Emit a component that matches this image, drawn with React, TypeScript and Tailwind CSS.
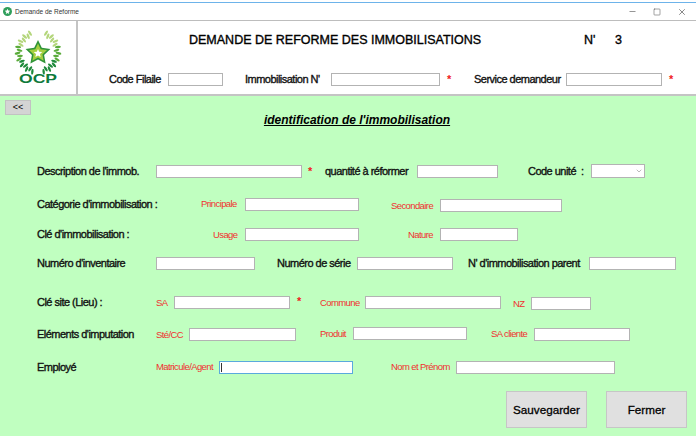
import { Minus, Square, X, ChevronDown } from 'lucide-react'

const sans = "font-['Liberation_Sans',Arial,sans-serif]"

function starPoints(cx: number, cy: number, outer: number, inner: number) {
  const pts: string[] = []
  for (let i = 0; i < 10; i++) {
    const r = i % 2 === 0 ? outer : inner
    const a = (-90 + i * 36) * (Math.PI / 180)
    pts.push(`${(cx + r * Math.cos(a)).toFixed(1)},${(cy + r * Math.sin(a)).toFixed(1)}`)
  }
  return pts.join(' ')
}

// OCP emblem: wheat wreath round a green star
function Logo() {
  const cx = 38
  const cy = 31
  const leaves: { x: number; y: number; rot: number; fill: string }[] = []
  for (let i = 0; i < 17; i++) {
    const deg = 16 + i * 8.8
    const a = (deg * Math.PI) / 180
    const r = i % 2 === 0 ? 20.5 : 18.5
    const fill = i < 6 ? '#1f8a3c' : i < 11 ? '#5aab3a' : '#b4d67c'
    const x = r * Math.sin(a)
    const y = r * Math.cos(a)
    leaves.push({ x: cx + x, y: cy + y, rot: 90 - deg + (i % 2 === 0 ? 10 : -10), fill })
    leaves.push({ x: cx - x, y: cy + y, rot: deg - 90 - (i % 2 === 0 ? 10 : -10), fill })
  }
  return (
    <svg viewBox="0 0 76 73" className="w-[76px] h-[73px] shrink-0">
      {leaves.map((l, i) => (
        <ellipse key={i} cx={l.x} cy={l.y} rx="3" ry="1.2" fill={l.fill} transform={`rotate(${l.rot} ${l.x} ${l.y})`} />
      ))}
      <polygon points={starPoints(38, 32, 13, 6.4)} fill="#2f9438" />
      <polygon points={starPoints(38, 32, 9.5, 4.6)} fill="#a5cf3f" />
      <polygon points={starPoints(38, 32.5, 4.5, 2.1)} fill="#ffffff" />
      <text x="19" y="62" textLength="38" lengthAdjust="spacingAndGlyphs" fontFamily="'Liberation Sans', Arial, sans-serif" fontWeight="700" fontSize="13.5" fill="#0f7a3c">OCP</text>
    </svg>
  )
}

function Field({ className = '' }: { className?: string }) {
  return <input className={`h-[13px] shrink-0 border border-[#b3b3b3] bg-white outline-none ${className}`} />
}

function Label({ children, className = '' }: { children: React.ReactNode; className?: string }) {
  return <span className={`shrink-0 whitespace-nowrap text-[11px] tracking-[-0.52px] leading-[14px] text-[#111] [-webkit-text-stroke:0.35px_#111] ${className}`}>{children}</span>
}

function Red({ children, className = '' }: { children: React.ReactNode; className?: string }) {
  return <span className={`shrink-0 whitespace-nowrap text-[9.5px] tracking-[-0.6px] leading-[14px] text-[#f03030] ${className}`}>{children}</span>
}

function Star({ className = '' }: { className?: string }) {
  return <span className={`shrink-0 text-[11px] leading-[14px] font-bold text-[#f02020] ${className}`}>*</span>
}

export default function App() {
  return (
    <div className={`${sans} w-[696px] h-[436px] overflow-hidden bg-white flex flex-col`}>
      {/* Title bar */}
      <div className="h-[21px] shrink-0 border-b border-[#bdbdbd] flex flex-col">
        <div className="h-[3px] shrink-0 border-b border-[#6db3ea]" />
        <div className="flex-1 flex items-center pl-[3px]">
          <svg viewBox="0 0 10 10" className="w-[9px] h-[9px] shrink-0">
            <circle cx="5" cy="5" r="5" fill="#2f9e5b" />
            <polygon points={starPoints(5, 5.2, 3.2, 1.5)} fill="#ffffff" />
          </svg>
          <span className="ml-[3px] text-[6.5px] leading-[10px] text-[#333]">Demande de Reforme</span>
          <div className="ml-auto flex items-center text-[#444]">
            <Minus className="w-[9px] h-[9px] mr-[16px]" strokeWidth={1.5} />
            <Square className="w-[8px] h-[8px] mr-[16px]" strokeWidth={1.5} />
            <X className="w-[10px] h-[10px] mr-[9px]" strokeWidth={1.5} />
          </div>
        </div>
      </div>

      {/* Header */}
      <div className="h-[75px] shrink-0 flex border-b-2 border-[#c4c4c4]">
        <Logo />
        <div className="flex-1 border-l-2 border-[#c4c4c4] flex flex-col">
          <div className="mt-[12px] h-[14px] flex items-center pl-[111px] text-[12.5px] leading-[14px] text-black [-webkit-text-stroke:0.35px_#000]">
            <span className="w-[395px] whitespace-nowrap">DEMANDE DE REFORME DES IMMOBILISATIONS</span>
            <span className="w-[31px]">N'</span>
            <span>3</span>
          </div>
          <div className="mt-[25px] h-[14px] flex items-center pl-[31px]">
            <Label className="w-[59px]">Code Filaile</Label>
            <Field className="w-[55px]" />
            <Label className="ml-[22px] w-[86px]">Immobilisation N'</Label>
            <Field className="w-[109px]" />
            <Star className="ml-[7px] w-[27px]" />
            <Label className="w-[92px]">Service demandeur</Label>
            <Field className="w-[96px]" />
            <Star className="ml-[7px]" />
          </div>
        </div>
      </div>

      {/* Body */}
      <div className="flex-1 bg-[#c0ffc0] flex flex-col">
        <button className="ml-[5px] mt-[4px] w-[26px] h-[15px] bg-[#d4d4d4] border border-[#c2c2c2] text-[9px] leading-[13px] text-black">&lt;&lt;</button>
        <div className="-mt-[3px] h-[16px] text-center text-[12px] leading-[16px] font-bold italic underline text-black pl-[18px]">identification de l'immobilisation</div>

        <div className="mt-[36px] pl-[37px] h-[14px] flex items-center">
          <Label className="w-[119px]">Description de l'immob.</Label>
          <Field className="mt-[1px] w-[146px]" />
          <Star className="ml-[6px] w-[17px]" />
          <Label className="w-[92px]">quantité à réformer</Label>
          <Field className="mt-[1px] w-[81px]" />
          <Label className="ml-[30px] w-[53px]">Code unité</Label>
          <Label className="w-[10px]">:</Label>
          <div className="w-[54px] h-[14px] shrink-0 bg-white border border-[#b3b3b3] flex items-center justify-end pr-[1px]">
            <ChevronDown className="w-[8px] h-[8px] text-[#777]" strokeWidth={1.5} />
          </div>
        </div>

        <div className="mt-[19px] pl-[37px] h-[14px] flex items-center">
          <Label className="w-[164px]">Catégorie d'immobilisation :</Label>
          <Red className="w-[44px]">Principale</Red>
          <Field className="w-[114px]" />
          <Red className="ml-[32px] w-[49px] mt-[4px]">Secondaire</Red>
          <Field className="mt-[2px] w-[122px]" />
        </div>

        <div className="mt-[16px] pl-[37px] h-[14px] flex items-center">
          <Label className="w-[176px]">Clé d'immobilisation :</Label>
          <Red className="w-[32px] mt-[2px]">Usage</Red>
          <Field className="mt-[1px] w-[114px]" />
          <Red className="ml-[49px] w-[32px] mt-[2px]">Nature</Red>
          <Field className="mt-[1px] w-[78px]" />
        </div>

        <div className="mt-[15px] pl-[37px] h-[14px] flex items-center">
          <Label className="w-[119px]">Numéro d'inventaire</Label>
          <Field className="mt-[1px] w-[99px]" />
          <Label className="ml-[22px] w-[80px]">Numéro de série</Label>
          <Field className="mt-[1px] w-[96px]" />
          <Label className="ml-[15px] w-[121px]">N' d'immobilisation parent</Label>
          <Field className="mt-[1px] w-[87px]" />
        </div>

        <div className="mt-[25px] pl-[37px] h-[14px] flex items-center">
          <Label className="w-[119px]">Clé site (Lieu) :</Label>
          <Red className="w-[18px] mt-[1px]">SA</Red>
          <Field className="mt-[1px] w-[116px]" />
          <Star className="ml-[7px] w-[23px] -mt-[3px]" />
          <Red className="w-[45px] mt-[2px]">Commune</Red>
          <Field className="mt-[1px] w-[136px]" />
          <Red className="ml-[12px] w-[18px] mt-[4px]">NZ</Red>
          <Field className="mt-[3px] w-[60px]" />
        </div>

        <div className="mt-[18px] pl-[37px] h-[14px] flex items-center">
          <Label className="w-[119px]">Eléments d'imputation</Label>
          <Red className="w-[33px] mt-[1px]">Sté/CC</Red>
          <Field className="mt-[1px] w-[107px]" />
          <Red className="ml-[24px] w-[33px] -mt-[1px]">Produit</Red>
          <Field className="-mt-[2px] w-[114px]" />
          <Red className="ml-[24px] w-[43px]">SA cliente</Red>
          <Field className="mt-[1px] w-[96px]" />
        </div>

        <div className="mt-[19px] pl-[37px] h-[14px] flex items-center">
          <Label className="w-[119px]">Employé</Label>
          <Red className="w-[63px]">Matricule/Agent</Red>
          <div className="mt-[1px] w-[134px] h-[13px] shrink-0 border border-[#5aa9dd] bg-white flex items-center pl-[1px]">
            <div className="w-px h-[9px] bg-[#333]" />
          </div>
          <Red className="ml-[38px] w-[65px]">Nom et Prénom</Red>
          <Field className="mt-[1px] w-[159px]" />
        </div>

        <div className="mt-[17px] pr-[9px] flex justify-end gap-[19px]">
          <button className="w-[81px] h-[37px] bg-[#e0e0e0] border border-[#c6c6c6] text-[11.7px] text-black [-webkit-text-stroke:0.3px_#000]">Sauvegarder</button>
          <button className="w-[81px] h-[37px] bg-[#e0e0e0] border border-[#c6c6c6] text-[11.7px] text-black [-webkit-text-stroke:0.3px_#000]">Fermer</button>
        </div>
      </div>
    </div>
  )
}
